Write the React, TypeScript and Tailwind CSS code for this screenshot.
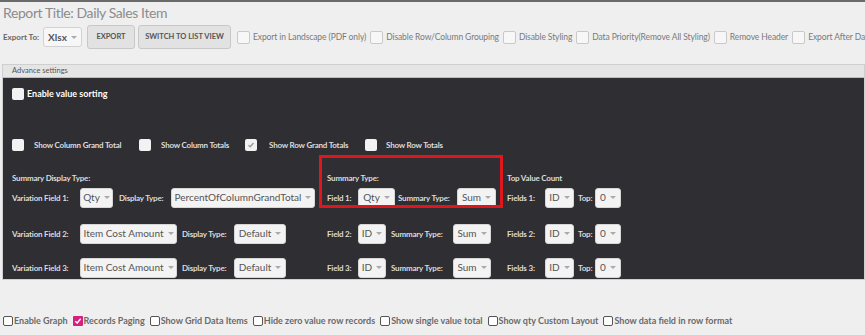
import React from 'react';

const font = { fontFamily: 'Lato, "Open Sans", sans-serif' };

const Caret = () => (
  <span className="ml-[4px] inline-block w-0 h-0 border-l-[3px] border-r-[3px] border-t-[3px] border-l-transparent border-r-transparent border-t-[#aaa]" />
);

interface SelectProps {
  value: string;
  w: string;
}

const Select: React.FC<SelectProps> = ({ value, w }) => (
  <div className={`${w} h-[20px] shrink-0 flex items-center justify-center rounded-[3px] bg-[#f3f3f3] border border-[#d6d6d6] text-[10px] text-[#555]`}>
    {value}
    <Caret />
  </div>
);

const Label: React.FC<{ children: React.ReactNode; w?: string }> = ({ children, w }) => (
  <span className={`${w ?? ''} shrink-0 text-[8px] font-bold text-[#dcdcdc] tracking-[-0.2px] whitespace-nowrap`}>{children}</span>
);

const DarkBox: React.FC<{ checked?: boolean }> = ({ checked }) => (
  <span className="w-[12px] h-[12px] shrink-0 rounded-[2px] bg-[#f2f2f2] flex items-center justify-center">
    {checked && (
      <svg width="8" height="8" viewBox="0 0 8 8">
        <path d="M1.5 4.2 L3.2 5.8 L6.5 2" stroke="#9a9a9a" strokeWidth="1.4" fill="none" />
      </svg>
    )}
  </span>
);

const LightBox = () => (
  <span className="w-[13px] h-[13px] shrink-0 rounded-[2px] bg-[#f7f7f7] border border-[#c9c9c9]" />
);

const BottomBox: React.FC<{ checked?: boolean }> = ({ checked }) =>
  checked ? (
    <span className="w-[10px] h-[10px] shrink-0 rounded-[1px] bg-[#d6207f] flex items-center justify-center">
      <svg width="8" height="8" viewBox="0 0 8 8">
        <path d="M1.3 4.2 L3.2 6 L6.7 1.8" stroke="#fff" strokeWidth="1.5" fill="none" />
      </svg>
    </span>
  ) : (
    <span className="w-[10px] h-[10px] shrink-0 rounded-[2px] bg-white border border-[#555]" />
  );

export default function App() {
  const exportOpts = [
    'Export in Landscape (PDF only)',
    'Disable Row/Column Grouping',
    'Disable Styling',
    'Data Priority(Remove All Styling)',
    'Remove Header',
    'Export After Data',
  ];
  const bottomOpts: [string, boolean][] = [
    ['Enable Graph', false],
    ['Records Paging', true],
    ['Show Grid Data Items', false],
    ['Hide zero value row records', false],
    ['Show single value total', false],
    ['Show qty Custom Layout', false],
    ['Show data field in row format', false],
  ];

  return (
    <div className="w-[865px] h-[335px] overflow-hidden bg-[#efefef] border-t-2 border-[#6a6a6a]" style={font}>
      <div className="pl-[3px] h-[20px] flex items-center text-[14px] text-[#8c8c8c] tracking-[-0.4px]">
        Report Title: Daily Sales Item
      </div>

      <div className="flex items-center h-[26px] pl-[3px] mt-[2px] whitespace-nowrap overflow-hidden">
        <span className="shrink-0 text-[8px] font-bold text-[#666] w-[40px]">Export To:</span>
        <div className="shrink-0 w-[39px] h-[20px] flex items-center justify-center rounded-[3px] bg-[#f7f7f7] border border-[#d2d2d2] text-[10px] font-bold text-[#555]">
          Xlsx
          <Caret />
        </div>
        <button className="shrink-0 ml-[5px] w-[48px] h-[24px] rounded-[3px] bg-[#e2e2e2] border border-[#c8c8c8] text-[7.5px] font-bold text-[#555]">
          EXPORT
        </button>
        <button className="shrink-0 ml-[3px] w-[93px] h-[24px] rounded-[3px] bg-[#e2e2e2] border border-[#c8c8c8] text-[7.5px] font-bold text-[#555]">
          SWITCH TO LIST VIEW
        </button>
        <div className="shrink-0 ml-[6px] flex items-center gap-[4px]">
          {exportOpts.map((o) => (
            <span key={o} className="shrink-0 flex items-center gap-[3px]">
              <LightBox />
              <span className="text-[8.5px] tracking-[-0.1px] text-[#7a7a7a]">{o}</span>
            </span>
          ))}
        </div>
      </div>

      <div className="ml-[2px] mt-[14px] border border-[#cfcfcf]">
        <div className="h-[13px] bg-[#e5e5e5] border-b border-[#bdbdbd] pl-[9px] flex items-center text-[7.5px] text-[#555]">
          Advance settings
        </div>
        <div className="h-[201px] bg-[#2f2e32] pl-[9px] pt-[9px]">
          <div className="flex items-center gap-[3px]">
            <DarkBox />
            <span className="text-[9px] font-bold text-white">Enable value sorting</span>
          </div>

          <div className="mt-[38px] flex items-center">
            <DarkBox />
            <Label w="ml-[10px] w-[105px]">Show Column Grand Total</Label>
            <DarkBox />
            <Label w="ml-[10px] w-[84px]">Show Column Totals</Label>
            <DarkBox checked />
            <Label w="ml-[12px] w-[96px]">Show Row Grand Totals</Label>
            <DarkBox />
            <Label w="ml-[9px]">Show Row Totals</Label>
          </div>

          <div className="mt-[21px] flex">
            <div className="w-[315px] flex flex-col">
              <div className="h-[12px] flex items-center"><Label>Summary Display Type:</Label></div>
              <div className="mt-[4px] flex items-center">
                <Label w="w-[68px]">Variation Field 1:</Label>
                <Select value="Qty" w="w-[33px]" />
                <Label w="ml-[6px] w-[52px]">Display Type:</Label>
                <Select value="PercentOfColumnGrandTotal" w="w-[144px]" />
              </div>
              <div className="mt-[16px] flex items-center">
                <Label w="w-[68px]">Variation Field 2:</Label>
                <Select value="Item Cost Amount" w="w-[97px]" />
                <Label w="ml-[5px] w-[52px]">Display Type:</Label>
                <Select value="Default" w="w-[52px]" />
              </div>
              <div className="mt-[14px] flex items-center">
                <Label w="w-[68px]">Variation Field 3:</Label>
                <Select value="Item Cost Amount" w="w-[97px]" />
                <Label w="ml-[5px] w-[52px]">Display Type:</Label>
                <Select value="Default" w="w-[52px]" />
              </div>
            </div>

            <div className="w-[180px] flex flex-col relative">
              <div className="absolute left-[-8px] top-[-17px] w-[184px] h-[53px] border-[3px] border-[#e0161d]" />
              <div className="h-[12px] flex items-center"><Label>Summary Type:</Label></div>
              <div className="mt-[4px] flex items-center">
                <Label w="w-[31px]">Field 1:</Label>
                <Select value="Qty" w="w-[37px]" />
                <Label w="ml-[3px] w-[59px]">Summary Type:</Label>
                <Select value="Sum" w="w-[39px]" />
              </div>
              <div className="mt-[16px] flex items-center">
                <Label w="w-[31px]">Field 2:</Label>
                <Select value="ID" w="w-[28px]" />
                <Label w="ml-[5px] w-[62px]">Summary Type:</Label>
                <Select value="Sum" w="w-[38px]" />
              </div>
              <div className="mt-[14px] flex items-center">
                <Label w="w-[31px]">Field 3:</Label>
                <Select value="ID" w="w-[28px]" />
                <Label w="ml-[5px] w-[62px]">Summary Type:</Label>
                <Select value="Sum" w="w-[38px]" />
              </div>
            </div>

            <div className="flex flex-col">
              <div className="h-[12px] flex items-center"><Label>Top Value Count</Label></div>
              {['1', '2', '3'].map((n, i) => (
                <div key={n} className={`${i === 0 ? 'mt-[4px]' : i === 1 ? 'mt-[16px]' : 'mt-[14px]'} flex items-center`}>
                  <Label w="w-[38px]">Fields {n}:</Label>
                  <Select value="ID" w="w-[29px]" />
                  <Label w="ml-[4px] w-[17px]">Top:</Label>
                  <Select value="0" w="w-[26px]" />
                </div>
              ))}
            </div>
          </div>
        </div>
      </div>

      <div className="mt-[34px] pl-[3px] flex items-center whitespace-nowrap">
        {bottomOpts.map(([o, c]) => (
          <span key={o} className="shrink-0 flex items-center mr-[5px]">
            <BottomBox checked={c} />
            <span className="ml-[1px] text-[9px] font-bold text-[#6a6a6a]">{o}</span>
          </span>
        ))}
      </div>
    </div>
  );
}
